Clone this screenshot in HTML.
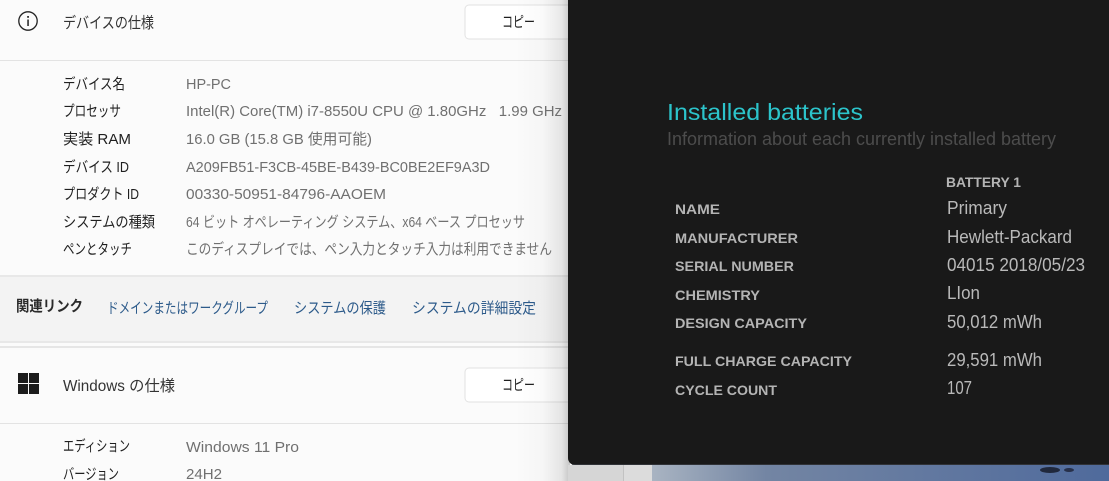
<!DOCTYPE html>
<html lang="ja"><head><meta charset="utf-8"><style>
html,body{margin:0;padding:0;width:1109px;height:481px;overflow:hidden;background:#fbfbfb}
svg{display:block;position:absolute;left:0;top:0;filter:blur(.3px)}
text{font-family:"Liberation Sans","Noto Sans CJK JP",sans-serif}
.l{font-size:15px;fill:#1f1f1f}
.v{font-size:15px;fill:#707070}
.h{font-size:15.5px;fill:#333}
.a{font-size:15px;fill:#2c5a8a}
.k{font-size:14px;font-weight:700;fill:#b4b4b4}
.d{font-size:18px;fill:#b9b9b9}
</style></head><body>
<svg width="1109" height="481" viewBox="0 0 1109 481" xmlns="http://www.w3.org/2000/svg">
<defs>
<linearGradient id="sh" x1="0" x2="1" y1="0" y2="0"><stop offset="0" stop-color="#000" stop-opacity="0"/><stop offset=".5" stop-color="#000" stop-opacity=".02"/><stop offset=".85" stop-color="#000" stop-opacity=".09"/><stop offset="1" stop-color="#000" stop-opacity=".22"/></linearGradient>
<linearGradient id="wp" x1="0" x2="1" y1="0" y2="0"><stop offset="0" stop-color="#a9b4c2"/><stop offset=".25" stop-color="#7385a3"/><stop offset="1" stop-color="#4f6a9c"/></linearGradient>
</defs>
<rect width="1109" height="481" fill="#fbfbfb"/>
<rect y="60" width="570" height="1" fill="#e3e3e3"/>
<rect y="276" width="570" height="70" fill="#f3f3f3"/>
<rect y="275" width="570" height="2" fill="#e8e8e8"/>
<rect y="341" width="570" height="2" fill="#e8e8e8"/>
<rect y="343" width="570" height="3" fill="#fbfbfb"/>
<rect y="346" width="570" height="2" fill="#e6e6e6"/>
<rect y="423" width="570" height="1" fill="#e3e3e3"/>
<rect x="465" y="5" width="120" height="34" rx="4" fill="#fff" stroke="#e2e2e2"/>
<rect x="465" y="368" width="120" height="34" rx="4" fill="#fff" stroke="#e2e2e2"/>
<rect x="515" y="0" width="55" height="481" fill="url(#sh)"/>
<rect x="568" y="465" width="56" height="16" fill="#d6d6d6"/>
<rect x="624" y="465" width="28" height="16" fill="#dcdcdc"/>
<rect x="623" y="465" width="1" height="16" fill="#c2c2c2"/>
<rect x="652" y="465" width="457" height="16" fill="url(#wp)"/>
<ellipse cx="1050" cy="470" rx="10" ry="3" fill="#20283c"/><ellipse cx="1069" cy="470" rx="5" ry="2" fill="#27304a"/>

<circle cx="28" cy="21" r="9.2" fill="none" stroke="#222" stroke-width="1.3"/>
<rect x="27.3" y="19.5" width="1.5" height="6.5" fill="#222"/><rect x="27.2" y="16" width="1.7" height="1.8" fill="#222"/>
<g fill="#1c1c1c"><rect x="18" y="373" width="10" height="10"/><rect x="29" y="373" width="10" height="10"/><rect x="18" y="384" width="10" height="10"/><rect x="29" y="384" width="10" height="10"/></g>

<text lengthAdjust="spacingAndGlyphs" class="h" x="63" y="28" textLength="91">デバイスの仕様</text>
<text lengthAdjust="spacingAndGlyphs" class="l" x="63" y="89" textLength="62">デバイス名</text>
<text lengthAdjust="spacingAndGlyphs" class="l" x="63" y="116" textLength="58">プロセッサ</text>
<text lengthAdjust="spacingAndGlyphs" class="l" x="63" y="144" textLength="68">実装 RAM</text>
<text lengthAdjust="spacingAndGlyphs" class="l" x="63" y="172" textLength="66">デバイス ID</text>
<text lengthAdjust="spacingAndGlyphs" class="l" x="63" y="199" textLength="76">プロダクト ID</text>
<text lengthAdjust="spacingAndGlyphs" class="l" x="63" y="227" textLength="92">システムの種類</text>
<text lengthAdjust="spacingAndGlyphs" class="l" x="63" y="254" textLength="69">ペンとタッチ</text>
<text lengthAdjust="spacingAndGlyphs" class="v" x="186" y="89" textLength="45">HP-PC</text>
<text lengthAdjust="spacingAndGlyphs" class="v" x="186" y="116" textLength="376" xml:space="preserve">Intel(R) Core(TM) i7-8550U CPU @ 1.80GHz   1.99 GHz</text>
<text lengthAdjust="spacingAndGlyphs" class="v" x="186" y="144" textLength="186">16.0 GB (15.8 GB 使用可能)</text>
<text lengthAdjust="spacingAndGlyphs" class="v" x="186" y="172" textLength="304">A209FB51-F3CB-45BE-B439-BC0BE2EF9A3D</text>
<text lengthAdjust="spacingAndGlyphs" class="v" x="186" y="199" textLength="200">00330-50951-84796-AAOEM</text>
<text lengthAdjust="spacingAndGlyphs" class="v" x="186" y="227" textLength="339">64 ビット オペレーティング システム、x64 ベース プロセッサ</text>
<text lengthAdjust="spacingAndGlyphs" class="v" x="186" y="254" textLength="366">このディスプレイでは、ペン入力とタッチ入力は利用できません</text>
<text lengthAdjust="spacingAndGlyphs" class="l" x="16" y="311" textLength="67" font-weight="700" style="fill:#2a2a2a">関連リンク</text>
<text lengthAdjust="spacingAndGlyphs" class="a" x="107" y="313" textLength="161">ドメインまたはワークグループ</text>
<text lengthAdjust="spacingAndGlyphs" class="a" x="294" y="313" textLength="92">システムの保護</text>
<text lengthAdjust="spacingAndGlyphs" class="a" x="412" y="313" textLength="124">システムの詳細設定</text>
<text lengthAdjust="spacingAndGlyphs" class="h" x="63" y="391" textLength="112">Windows の仕様</text>
<text lengthAdjust="spacingAndGlyphs" class="l" x="63" y="451" textLength="67">エディション</text>
<text lengthAdjust="spacingAndGlyphs" class="l" x="63" y="479" textLength="56">バージョン</text>
<text lengthAdjust="spacingAndGlyphs" class="v" x="186" y="452" textLength="113">Windows 11 Pro</text>
<text lengthAdjust="spacingAndGlyphs" class="v" x="186" y="479" textLength="36">24H2</text>
<text lengthAdjust="spacingAndGlyphs" class="l" x="502" y="27" textLength="33">コピー</text>
<text lengthAdjust="spacingAndGlyphs" class="l" x="502" y="390" textLength="33">コピー</text>

<rect x="568" y="-10" width="560" height="475" rx="7" fill="#191919"/>
<rect x="572" y="464" width="537" height="1" fill="#3a3d44" opacity=".7"/>
<text lengthAdjust="spacingAndGlyphs" x="667" y="120" font-size="23" fill="#2cc4cb" textLength="196">Installed batteries</text>
<text lengthAdjust="spacingAndGlyphs" x="667" y="145" font-size="18" fill="#4c4c4c" textLength="389">Information about each currently installed battery</text>
<text lengthAdjust="spacingAndGlyphs" class="k" x="946" y="187" textLength="75">BATTERY 1</text>
<text lengthAdjust="spacingAndGlyphs" class="k" x="675" y="214" textLength="45">NAME</text>
<text lengthAdjust="spacingAndGlyphs" class="k" x="675" y="243" textLength="123">MANUFACTURER</text>
<text lengthAdjust="spacingAndGlyphs" class="k" x="675" y="271" textLength="119">SERIAL NUMBER</text>
<text lengthAdjust="spacingAndGlyphs" class="k" x="675" y="300" textLength="85">CHEMISTRY</text>
<text lengthAdjust="spacingAndGlyphs" class="k" x="675" y="328" textLength="132">DESIGN CAPACITY</text>
<text lengthAdjust="spacingAndGlyphs" class="k" x="675" y="366" textLength="177">FULL CHARGE CAPACITY</text>
<text lengthAdjust="spacingAndGlyphs" class="k" x="675" y="395" textLength="102">CYCLE COUNT</text>
<text lengthAdjust="spacingAndGlyphs" class="d" x="947" y="214" textLength="60">Primary</text>
<text lengthAdjust="spacingAndGlyphs" class="d" x="947" y="243" textLength="125">Hewlett-Packard</text>
<text lengthAdjust="spacingAndGlyphs" class="d" x="947" y="271" textLength="138">04015 2018/05/23</text>
<text lengthAdjust="spacingAndGlyphs" class="d" x="947" y="299" textLength="33">LIon</text>
<text lengthAdjust="spacingAndGlyphs" class="d" x="947" y="328" textLength="95">50,012 mWh</text>
<text lengthAdjust="spacingAndGlyphs" class="d" x="947" y="366" textLength="95">29,591 mWh</text>
<text lengthAdjust="spacingAndGlyphs" class="d" x="947" y="394" textLength="25">107</text>
</svg>
</body></html>
